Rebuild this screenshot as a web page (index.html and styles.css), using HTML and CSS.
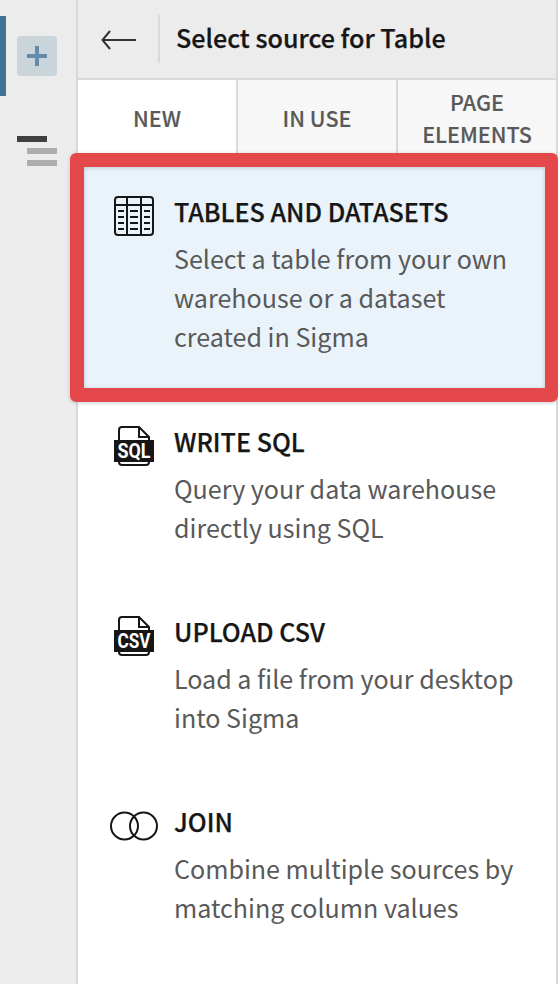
FILE: index.html
```html
<!DOCTYPE html>
<html lang="en">
<head>
<meta charset="utf-8">
<title>Select source for Table</title>
<link rel="stylesheet" href="styles.css">
</head>
<body>
<div class="app">
  <aside class="rail">
    <div class="rail-tab active"><button class="add" aria-label="Add"><svg width="20" height="20"><path d="M8 0h4v8h8v4h-8v8H8v-8H0V8h8z" fill="#618dab"/></svg></button></div>
    <svg class="outline" width="40" height="30"><path d="M0 0h30v6H0z" fill="#404040"/><path d="M10 12h30v6H10zM10 24h30v6H10z" fill="#adadad"/></svg>
  </aside>
  <main class="panel">
    <header class="header">
      <svg class="back" width="36" height="20" fill="none" stroke="#333" stroke-width="2"><path d="M35 10H1.500M9 1L1.500 10l7.500 9"/></svg>
      <span class="divider"></span>
      <h1><span>Select source for Table</span></h1>
    </header>
    <nav class="tabs">
      <div class="tab selected"><span>NEW</span></div>
      <div class="tab"><span>IN USE</span></div>
      <div class="tab"><span>PAGE<br>ELEMENTS</span></div>
    </nav>
    <section class="list">
      <article class="item highlighted">
        <svg class="icon" width="48" height="40" fill="none" stroke="#161616" stroke-width="2"><rect x="5" y="1" width="38" height="38" rx="3"/><path d="M5 9h38M17 1v38M31 1v38M8 15h6M20 15h8M34 15h6M8 21h6M20 21h8M34 21h6M8 27h6M20 27h8M34 27h6M8 33h6M20 33h8M34 33h6"/></svg>
        <div><h2>TABLES AND DATASETS</h2><p>Select a table from your own<br>warehouse or a dataset<br>created in Sigma</p></div>
      </article>
      <article class="item">
        <svg class="icon" width="48" height="40"><path d="M9 15V4q0-3 3-3h17l10 10v25q0 3-3 3H12q-3 0-3-3zM29 1v10h10" fill="none" stroke="#161616" stroke-width="2"/><path d="M4 14h40v22H4z" fill="#161616"/><text class="badge" x="24" y="32" textLength="33" lengthAdjust="spacingAndGlyphs">SQL</text></svg>
        <div><h2>WRITE SQL</h2><p>Query your data warehouse<br>directly using SQL</p></div>
      </article>
      <article class="item">
        <svg class="icon" width="48" height="40"><path d="M9 15V4q0-3 3-3h17l10 10v25q0 3-3 3H12q-3 0-3-3zM29 1v10h10" fill="none" stroke="#161616" stroke-width="2"/><path d="M4 14h40v22H4z" fill="#161616"/><text class="badge" x="24" y="32" textLength="33" lengthAdjust="spacingAndGlyphs">CSV</text></svg>
        <div><h2>UPLOAD CSV</h2><p>Load a file from your desktop<br>into Sigma</p></div>
      </article>
      <article class="item">
        <svg class="icon" width="48" height="40" fill="none" stroke="#161616" stroke-width="2"><circle cx="14.500" cy="20" r="13.500"/><circle cx="33.500" cy="20" r="13.500"/></svg>
        <div><h2>JOIN</h2><p>Combine multiple sources by<br>matching column values</p></div>
      </article>
    </section>
  </main>
</div>
</body>
</html>
```
FILE: styles.css
```css
*, *::after { box-sizing: border-box; }
body { margin: 0; font-family: "Noto Sans CJK SC", "Noto Sans", sans-serif; color: #161616; }
h1, h2, p { margin: 0; white-space: nowrap; }
.app { display: flex; width: 558px; height: 984px; overflow: hidden; background: #ececec; }
.rail { width: 76px; flex: none; padding-top: 16px; }
.rail-tab { height: 80px; border-left: 6px solid #407396; padding: 20px 0 0 11px; }
.add { width: 40px; height: 40px; padding: 0; border: 0; border-radius: 4px; background: #cad5db; display: grid; place-items: center; }
.outline { display: block; margin: 40px 0 0 17px; }
.panel { width: 482px; flex: none; border: solid #d9d9d9; border-width: 0 2px; background: #fff; }
.header { height: 80px; display: flex; align-items: center; background: #ececec; border-bottom: 2px solid #d9d9d9; }
.back { margin: 2px 0 0 23px; }
.divider { width: 2px; height: 48px; margin: 0 16px 0 21px; background: #d9d9d9; }
h1 { font-size: 25.100px; font-weight: 500; line-height: 39px; padding-bottom: 4px; -webkit-text-stroke: .25px #161616; }
.tabs { display: grid; grid-template-columns: 160px 160px 158px; height: 80px; }
.tab { display: grid; place-items: center; padding-bottom: 4px; background: #f7f7f7; border-right: 2px solid #d9d9d9; color: #595959; font-size: 21.500px; font-weight: 500; line-height: 32px; text-align: center; -webkit-text-stroke: .15px #595959; }
.tab.selected { background: #fff; }
.tab:last-child { border-right: 0; }
.item { position: relative; display: flex; gap: 16px; height: 190px; padding: 32px 0 0 32px; }
.icon { flex: none; margin-top: 4px; }
.item h2 { font-size: 25.080px; font-weight: 500; line-height: 39px; margin-bottom: 8px; -webkit-text-stroke: .25px #161616; }
.item p { font-size: 25.080px; line-height: 39px; color: #595959; }
.highlighted { height: 230px; background: #eaf3fa; }
.highlighted::after { content: ""; position: absolute; left: -8px; top: -7.500px; width: 488px; height: 249px; border: 14px solid #e5484b; border-right-width: 13px; border-radius: 6px; box-shadow: 0 1px 4px rgba(0,0,0,.18), inset 0 1px 4px rgba(0,0,0,.18); }
.badge { fill: #fff; font: 700 19.500px Roboto, sans-serif; text-anchor: middle; }
```
